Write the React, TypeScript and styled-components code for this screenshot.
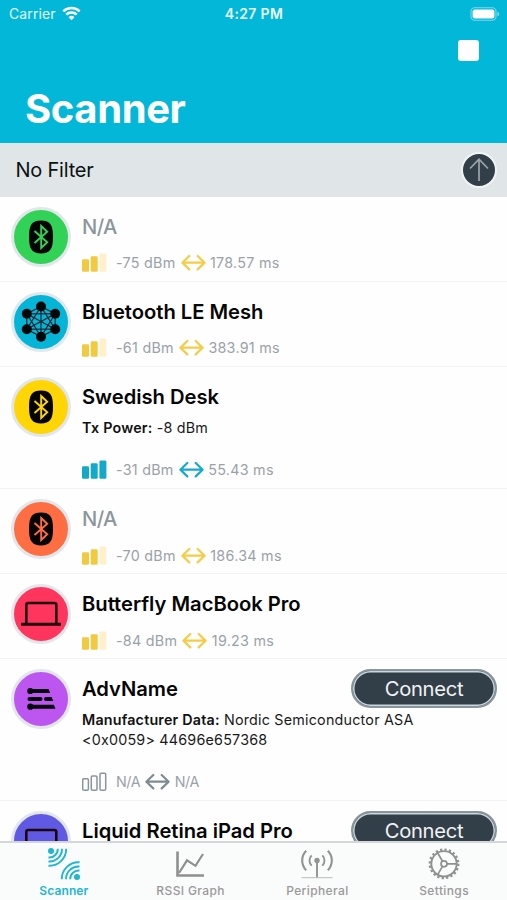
import React from 'react';
import styled, { createGlobalStyle } from 'styled-components';

const GlobalStyle = createGlobalStyle`
  * { box-sizing: border-box; }
  body { margin: 0; background: #fff; font-family: Inter, "Noto Sans", sans-serif; }
`;

const Screen = styled.div`
  height: 900px;
  display: flex;
  flex-direction: column;
  overflow: hidden;
  background: #fefefe;
`;

const Header = styled.header`
  height: 143px;
  flex: none;
  display: flex;
  flex-direction: column;
  background: #02b7d8;
  color: #fff;
`;

const StatusBar = styled.div`
  display: grid;
  grid-template-columns: 1fr auto 1fr;
  align-items: center;
  height: 27px;
  padding: 0 8px 0 9px;
  font-size: 14px;
  line-height: 27px;
`;

const Carrier = styled.div`
  display: flex;
  align-items: center;
  gap: 6px;
  letter-spacing: 0.1px;
  color: #e4fafd;
`;

const Clock = styled.div`
  font-weight: 600;
  letter-spacing: 0.35px;
  color: #e9fbfe;
`;

const BatterySlot = styled.div`
  display: flex;
  justify-content: flex-end;
`;

const NavActions = styled.div`
  display: flex;
  justify-content: flex-end;
  padding: 13px 28px 0 0;
  height: 34px;
`;

const StopButton = styled.button`
  width: 21px;
  height: 21px;
  padding: 0;
  border: 0;
  border-radius: 3px;
  background: #fff;
`;

const PageTitle = styled.h1`
  margin: 24px 0 0 25px;
  font-size: 40px;
  font-weight: 700;
  line-height: 48px;
  letter-spacing: -0.4px;
`;

const FilterBar = styled.div`
  height: 53.5px;
  flex: none;
  display: flex;
  align-items: center;
  justify-content: space-between;
  padding: 0 10px 0 15.5px;
  background: #e0e6e7;
  font-size: 20px;
  letter-spacing: -0.22px;
  color: #0d1112;
`;

const SortButton = styled.button`
  width: 36px;
  height: 36px;
  padding: 0;
  display: grid;
  place-items: center;
  border: 2px solid #f0f4f5;
  border-radius: 50%;
  background: #333f48;
`;

const List = styled.main`
  flex: 1;
  min-height: 0;
  overflow: hidden;
`;

const Row = styled.article<{ $height: number }>`
  height: ${(p) => p.$height}px;
  display: flex;
  padding: 10px 10px 0 11px;
  gap: 11px;
  border-bottom: 1px solid #f2f3f3;
`;

const Avatar = styled.div<{ $color: string }>`
  flex: none;
  width: 60px;
  height: 60px;
  display: grid;
  place-items: center;
  border: 3px solid #e1e7eb;
  border-radius: 50%;
  background: ${(p) => p.$color};
`;

const Body = styled.div`
  flex: 1;
  min-width: 0;
  padding-top: 7px;
`;

const TitleLine = styled.div`
  display: flex;
  align-items: center;
  justify-content: space-between;
  height: 26px;
`;

const Name = styled.h2<{ $muted?: boolean }>`
  margin: -1px 0 0;
  font-size: 20.2px;
  font-weight: ${(p) => (p.$muted ? 500 : 600)};
  letter-spacing: ${(p) => (p.$muted ? '-0.6px' : '-0.02px')};
  color: ${(p) => (p.$muted ? '#8b969c' : '#070707')};
  white-space: nowrap;
`;

const ConnectButton = styled.button`
  flex: none;
  width: 146px;
  height: 39px;
  margin-top: -1px;
  padding: 0;
  border: 2.5px solid #87959e;
  border-radius: 20px;
  background: #333f48;
  box-shadow: inset 0 0 0 1.5px #cbd5da;
  font: 400 20.2px/32px Inter, sans-serif;
  letter-spacing: -0.3px;
  color: #f0f3f4;
`;

const Attributes = styled.div`
  padding-top: 8px;
  font-size: 14.3px;
  line-height: 19.5px;
  letter-spacing: 0.22px;
  color: #191a1b;
  b { font-weight: 600; letter-spacing: 0.2px; color: #111; }
`;

const Meta = styled.div<{ $gap: number }>`
  display: flex;
  align-items: center;
  height: 20px;
  margin-top: ${(p) => p.$gap}px;
  font-size: 14.3px;
  color: #99a2a9;
  white-space: nowrap;
`;

const Reading = styled.span<{ $interval?: boolean; $missing: boolean }>`
  margin-left: ${(p) => (p.$interval ? 4.5 : 9)}px;
  margin-right: ${(p) => (p.$interval ? 0 : 5)}px;
  padding-bottom: 1px;
  letter-spacing: ${(p) => (p.$missing ? -0.4 : 0.28)}px;
`;

const TabBar = styled.nav`
  height: 59.5px;
  flex: none;
  display: grid;
  grid-template-columns: repeat(4, 1fr);
  border-top: 2px solid #d3d7d8;
  background: #fafbfb;
`;

const Tab = styled.div<{ $active?: boolean }>`
  display: flex;
  flex-direction: column;
  align-items: center;
  padding: 4px 0 0 1px;
  font-size: 12px;
  font-weight: ${(p) => (p.$active ? 600 : 500)};
  line-height: 14px;
  letter-spacing: ${(p) => (p.$active ? 0.1 : 0.38)}px;
  color: ${(p) => (p.$active ? '#1fb5d3' : '#999')};
  gap: 3px;
  svg { display: block; }
`;

const WifiIcon = () => (
  <svg width="19" height="15" viewBox="0 0 19 15" fill="none" stroke="#fff" strokeWidth="2.5">
    <path d="M1.3 5.3a11.7 11.7 0 0 1 16.4 0" />
    <path d="M4.3 8.6a7.4 7.4 0 0 1 10.4 0" />
    <path d="M9.5 14.2 6.5 11.2a4.3 4.3 0 0 1 6 0z" fill="#fff" stroke="none" />
  </svg>
);

const BatteryIcon = () => (
  <svg width="29" height="14" viewBox="0 0 29 14">
    <rect x="1" y="0.7" width="25" height="12.6" rx="3.7" fill="none" stroke="#7cdbeb" strokeWidth="1.1" />
    <rect x="2.6" y="2.4" width="21.8" height="9.2" rx="2" fill="#fff" />
    <path d="M27.3 5v4a2 2 0 0 0 0-4z" fill="#7cdbeb" />
  </svg>
);

const ArrowUp = () => (
  <svg width="22" height="26" viewBox="0 0 22 26" fill="none" stroke="#9aa5ad" strokeWidth="1.7">
    <path d="M11 24V2M2 11.5 11 2.2l9 9.3" />
  </svg>
);

const BluetoothIcon = ({ color }: { color: string }) => (
  <svg width="26" height="34" viewBox="0 0 26 34">
    <path d="M13 .6c8.8 0 12 4 12 16.4S21.8 33.4 13 33.4 1 29.4 1 17 4.2.6 13 .6z" fill="#050505" />
    <path d="M6.5 11 19.2 22.2 13.2 28V6l6 5.8L6.5 23" fill="none" stroke={color} strokeWidth="1.9" />
  </svg>
);

const meshNodes: [number, number][] = [
  [24, 8.5], [38.2, 15.8], [38.2, 31.2], [24, 38.8], [9.8, 31.2], [9.8, 15.8],
];

const MeshIcon = () => (
  <svg width="48" height="48" viewBox="0 0 48 48">
    <g stroke="#06181d" strokeWidth="1.1">
      {meshNodes.flatMap((a, i) =>
        meshNodes.slice(i + 1).map((b, j) => <line key={`${i}-${j}`} x1={a[0]} y1={a[1]} x2={b[0]} y2={b[1]} />),
      )}
    </g>
    {meshNodes.map(([x, y]) => <circle key={`${x}-${y}`} cx={x} cy={y} r="5" fill="#030708" />)}
  </svg>
);

const LaptopIcon = () => (
  <svg width="42" height="26" viewBox="0 0 42 26" fill="none" stroke="#1c060b" strokeWidth="2.6">
    <path d="M6.3 22.5V4a2 2 0 0 1 2-2h26a2 2 0 0 1 2 2v18.5" />
    <path d="M1 23.2h40" strokeWidth="2.9" />
  </svg>
);

const BlinkyIcon = () => (
  <svg width="32" height="24" viewBox="0 0 32 24" fill="#070409">
    <circle cx="5.3" cy="4" r="3.1" />
    <path d="M5 2.1h18.5l1.7 4H5z" />
    <rect x="2.5" y="9.9" width="15" height="4.1" rx="2" />
    <path d="M21 9.9h5.6l1.7 4.1H21a2 2 0 0 1 0-4.1z" />
    <circle cx="5.3" cy="19.7" r="3.1" />
    <path d="M5 17.7h23.8l1.7 4H5z" />
  </svg>
);

type Level = 'weak' | 'strong' | 'none';

const SignalBars = ({ level }: { level: Level }) => {
  if (level === 'none') {
    return (
      <svg width="25" height="20" viewBox="0 0 25 20" fill="none" stroke="#89949c" strokeWidth="1.5">
        <rect x="0.7" y="6.7" width="5.7" height="11.5" rx="1.3" />
        <rect x="9.3" y="4" width="5.7" height="14.2" rx="1.3" />
        <rect x="18" y="1.2" width="5.7" height="17" rx="1.3" />
      </svg>
    );
  }
  const color = level === 'strong' ? '#15a9c9' : '#f3c941';
  return (
    <svg width="25" height="20" viewBox="0 0 25 20" fill={color}>
      <rect x="0" y="6.2" width="7" height="12.6" rx="1.3" />
      <rect x="8.7" y="3.3" width="7" height="15.5" rx="1.3" />
      <rect x="17.4" y="0.6" width="7" height="18.2" rx="1.3" fill={level === 'strong' ? color : '#fff0cb'} />
    </svg>
  );
};

const IntervalArrow = ({ level }: { level: Level }) => (
  <svg
    width="25" height="18" viewBox="0 0 25 18" fill="none"
    stroke={level === 'strong' ? '#15a9d0' : level === 'none' ? '#7f8b93' : '#f6cb45'}
    strokeWidth="2.2" strokeLinecap="round" strokeLinejoin="round"
  >
    <path d="M1.5 8.7h22M8.3 2 1.4 8.7l6.9 6.7M16.7 2 23.6 8.7l-6.9 6.7" />
  </svg>
);

const ScannerTabIcon = () => (
  <svg width="34" height="34" viewBox="0 0 34 34" fill="none" stroke="#1fb5d3" strokeWidth="1.9">
    {[0, 180].map((turn) => (
      <g key={turn} transform={`rotate(${turn} 17 17)`}>
        <circle cx="4" cy="4" r="3" fill="#1fb5d3" stroke="none" />
        <path d="M1.5 10.5A8.5 8.5 0 0 0 10.8 1.8" />
        <path d="M1.5 14.5A12.5 12.5 0 0 0 15 1.8" />
        <path d="M1.5 18.7A16.7 16.7 0 0 0 19.2 1.8" />
      </g>
    ))}
  </svg>
);

const GraphIcon = () => (
  <svg width="34" height="34" viewBox="0 0 34 34" fill="none" stroke="#8f8f8f" strokeWidth="2.2">
    <path d="M3.5 4.5v24H30" strokeWidth="2.6" />
    <path d="M5 26 13 13.3l8.5 5.5L29 7" />
  </svg>
);

const PeripheralIcon = () => (
  <svg width="34" height="34" viewBox="0 0 34 34" fill="none" stroke="#929292" strokeWidth="1.9">
    <circle cx="17" cy="13.5" r="2.7" fill="#929292" stroke="none" />
    <path d="M17 13.5v17" />
    <path d="M1.5 30.7h31" strokeWidth="1" stroke="#bbb" />
    <path d="M11.7 8.4a7 7 0 0 0 0 10.2M22.3 8.4a7 7 0 0 1 0 10.2" />
    <path d="M6.2 3.7a14 14 0 0 0 0 19.6M27.8 3.7a14 14 0 0 1 0 19.6" strokeWidth="2.1" />
  </svg>
);

const GearIcon = () => (
  <svg width="34" height="34" viewBox="0 0 34 34" fill="none" stroke="#909090" strokeWidth="1.7">
    <circle cx="17" cy="16.8" r="12.7" strokeWidth="1.9" />
    <circle cx="17" cy="16.8" r="14.3" strokeWidth="2.2" strokeDasharray="2.25 2.242" />
    <circle cx="17" cy="16.8" r="3" />
    <path d="M20 16.8h9.5M15.5 14.2 10.7 6M15.5 19.4l-4.8 8.2" />
  </svg>
);

type Device = {
  name: string;
  color: string;
  icon: 'bluetooth' | 'mesh' | 'laptop' | 'blinky';
  level: Level;
  rssi: string;
  interval: string;
  height: number;
  connectable?: boolean;
  attribute?: [string, React.ReactNode];
};

const devices: Device[] = [
  { name: 'N/A', color: '#32d257', icon: 'bluetooth', level: 'weak', rssi: '-75 dBm', interval: '178.57 ms', height: 85 },
  { name: 'Bluetooth LE Mesh', color: '#05b5d7', icon: 'mesh', level: 'weak', rssi: '-61 dBm', interval: '383.91 ms', height: 85 },
  { name: 'Swedish Desk', color: '#ffd506', icon: 'bluetooth', level: 'strong', rssi: '-31 dBm', interval: '55.43 ms', height: 122.5, attribute: ['Tx Power:', '-8 dBm'] },
  { name: 'N/A', color: '#ff6d43', icon: 'bluetooth', level: 'weak', rssi: '-70 dBm', interval: '186.34 ms', height: 85 },
  { name: 'Butterfly MacBook Pro', color: '#ff355d', icon: 'laptop', level: 'weak', rssi: '-84 dBm', interval: '19.23 ms', height: 85 },
  { name: 'AdvName', color: '#bd56f1', icon: 'blinky', level: 'none', rssi: 'N/A', interval: 'N/A', height: 142, connectable: true, attribute: ['Manufacturer Data:', <>Nordic Semiconductor ASA<br />{'<0x0059> 44696e657368'}</>] },
  { name: 'Liquid Retina iPad Pro', color: '#6059e3', icon: 'laptop', level: 'none', rssi: 'N/A', interval: 'N/A', height: 142, connectable: true },
];

const DeviceIcon = ({ device }: { device: Device }) => {
  switch (device.icon) {
    case 'mesh': return <MeshIcon />;
    case 'laptop': return <LaptopIcon />;
    case 'blinky': return <BlinkyIcon />;
    default: return <BluetoothIcon color={device.color} />;
  }
};

const DeviceRow = ({ device }: { device: Device }) => (
  <Row $height={device.height}>
    <Avatar $color={device.color}><DeviceIcon device={device} /></Avatar>
    <Body>
      <TitleLine>
        <Name $muted={device.name === 'N/A'}>{device.name}</Name>
        {device.connectable && <ConnectButton>Connect</ConnectButton>}
      </TitleLine>
      {device.attribute && (
        <Attributes><b>{device.attribute[0]}</b> {device.attribute[1]}</Attributes>
      )}
      <Meta $gap={device.attribute ? 23 : 13.5}>
        <SignalBars level={device.level} />
        <Reading $missing={device.rssi === 'N/A'}>{device.rssi}</Reading>
        <IntervalArrow level={device.level} />
        <Reading $interval $missing={device.interval === 'N/A'}>{device.interval}</Reading>
      </Meta>
    </Body>
  </Row>
);

export default function App() {
  return (
    <>
      <GlobalStyle />
      <Screen>
        <Header>
          <StatusBar>
            <Carrier>Carrier <WifiIcon /></Carrier>
            <Clock>4:27 PM</Clock>
            <BatterySlot><BatteryIcon /></BatterySlot>
          </StatusBar>
          <NavActions><StopButton aria-label="Stop scanning" /></NavActions>
          <PageTitle>Scanner</PageTitle>
        </Header>
        <FilterBar>
          <span>No Filter</span>
          <SortButton aria-label="Expand filter"><ArrowUp /></SortButton>
        </FilterBar>
        <List>{devices.map((d, i) => <DeviceRow key={i} device={d} />)}</List>
        <TabBar>
          <Tab $active><ScannerTabIcon />Scanner</Tab>
          <Tab><GraphIcon />RSSI Graph</Tab>
          <Tab><PeripheralIcon />Peripheral</Tab>
          <Tab><GearIcon />Settings</Tab>
        </TabBar>
      </Screen>
    </>
  );
}
